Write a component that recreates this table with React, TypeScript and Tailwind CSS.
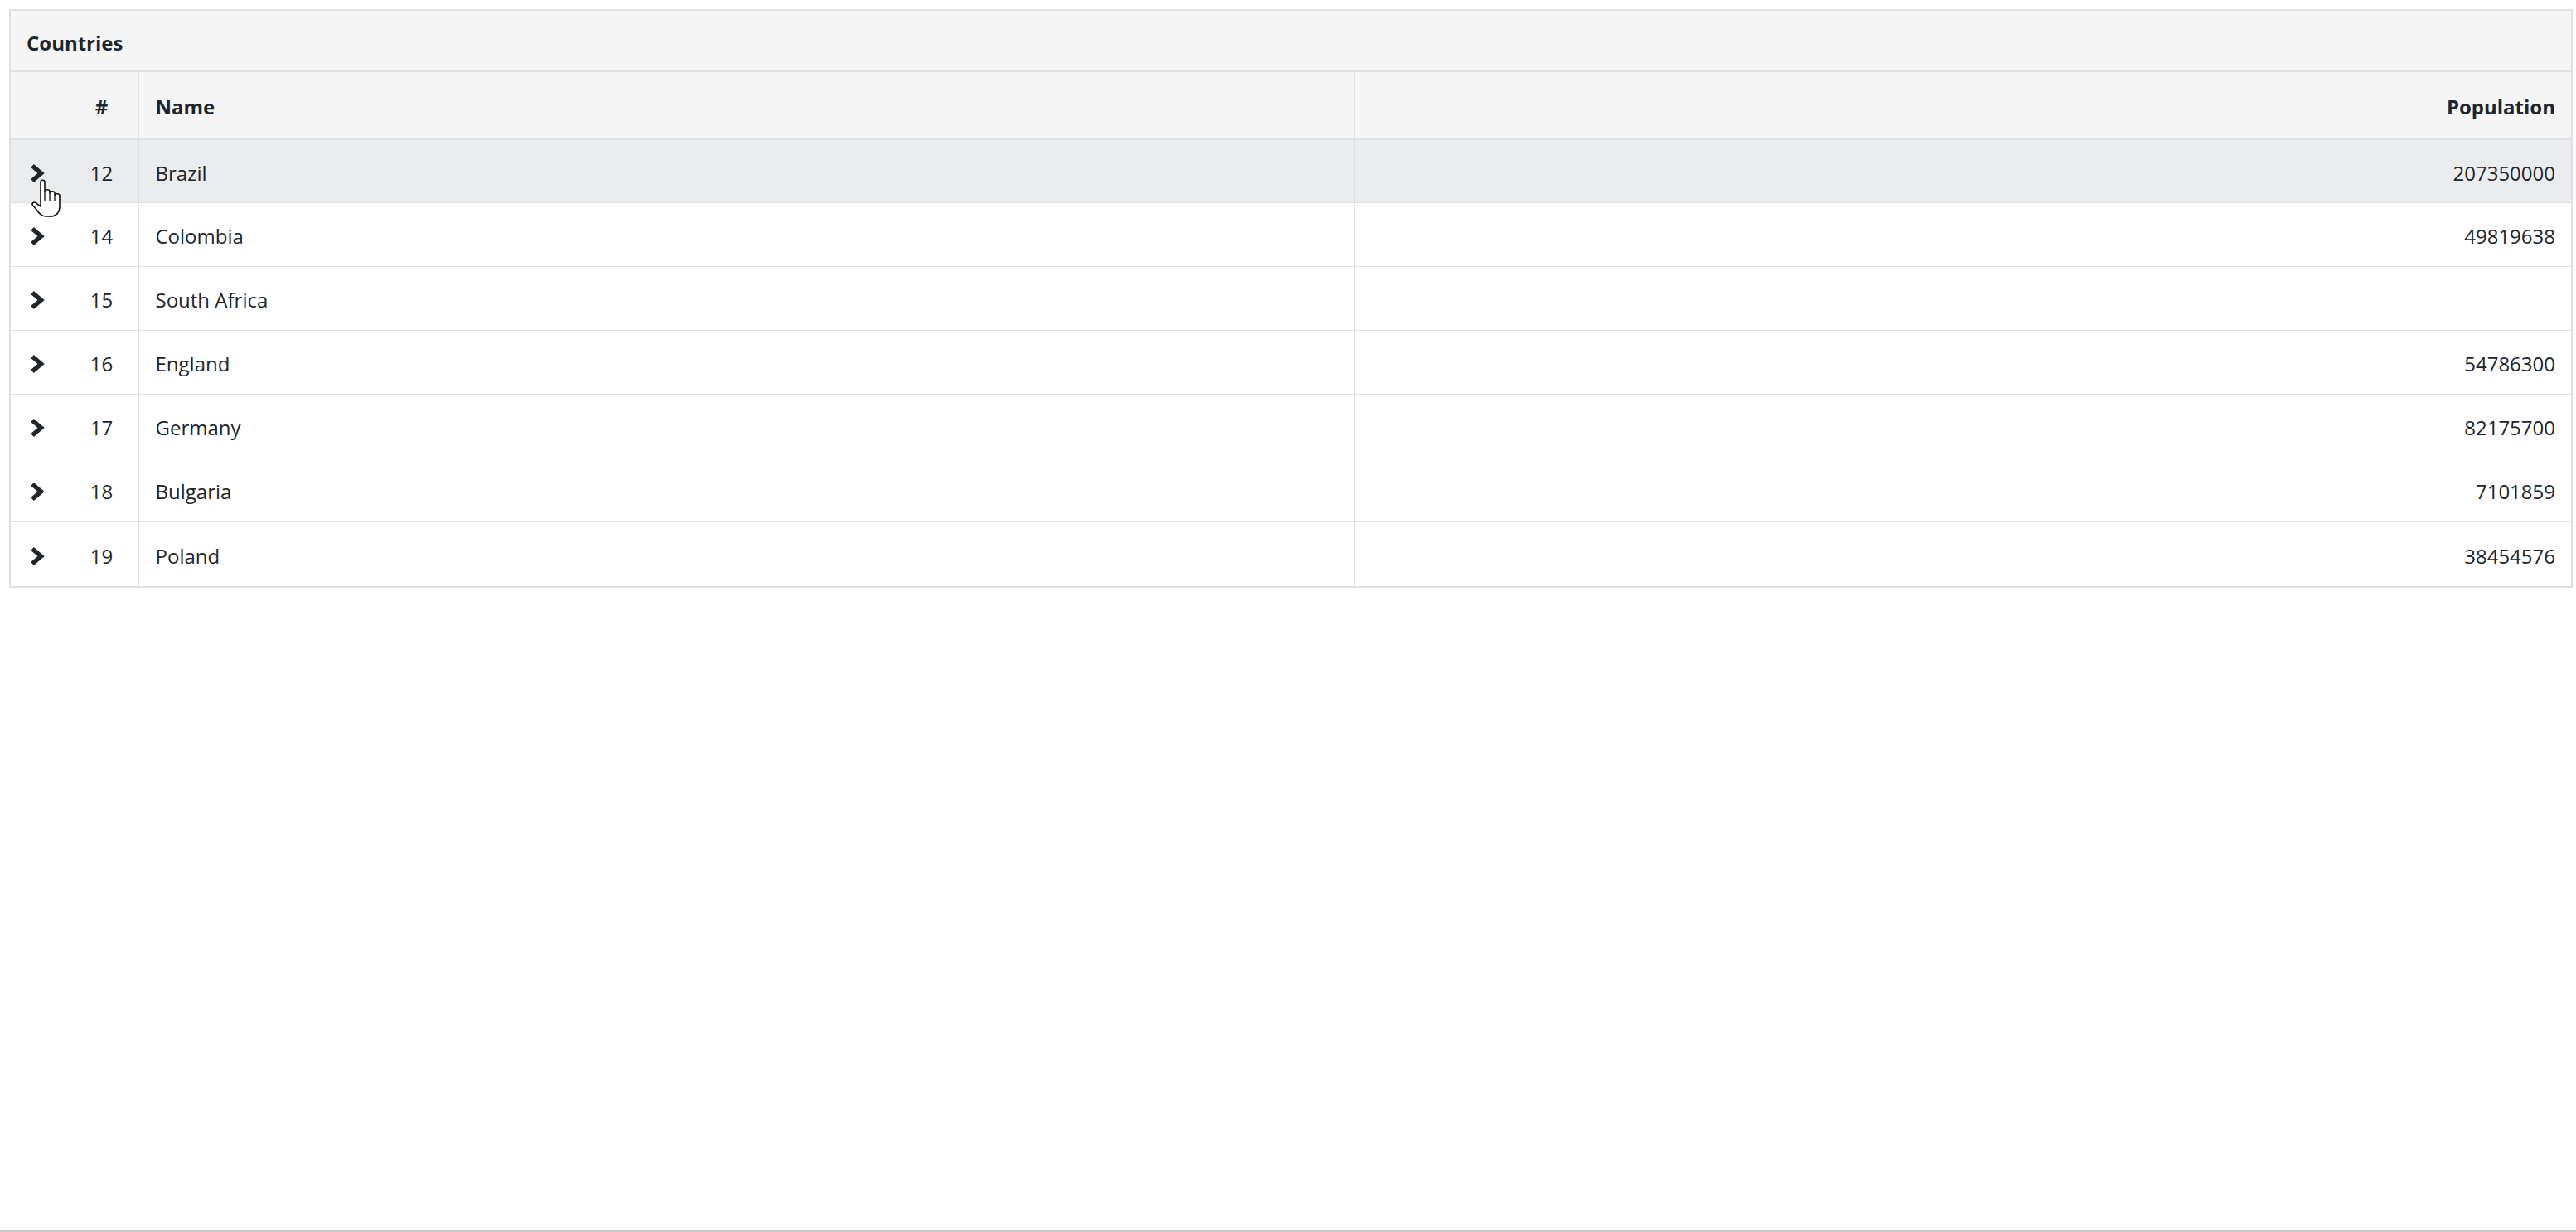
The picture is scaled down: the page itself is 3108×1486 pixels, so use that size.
const rows: { id: number; name: string; population: string }[] = [
  { id: 12, name: "Brazil", population: "207350000" },
  { id: 14, name: "Colombia", population: "49819638" },
  { id: 15, name: "South Africa", population: "" },
  { id: 16, name: "England", population: "54786300" },
  { id: 17, name: "Germany", population: "82175700" },
  { id: 18, name: "Bulgaria", population: "7101859" },
  { id: 19, name: "Poland", population: "38454576" },
];

function Chevron() {
  return (
    <svg width="20" height="24" viewBox="0 0 20 24" className="inline-block">
      <path
        d="M4 3 L14.5 12 L4 21"
        fill="none"
        stroke="#212529"
        strokeWidth="5.5"
        strokeLinejoin="miter"
      />
    </svg>
  );
}

function HandCursor() {
  return (
    <svg
      width="36"
      height="48"
      viewBox="0 0 36 48"
      className="pointer-events-none absolute left-[38px] top-[215px]"
    >
      <path
        d="M11 4.5 C11 1.5 16 1.5 16 4.5 L16 16 C16 13 22 13 22 16 L22 18 C22 15 28 15 28 18 L28 21 C28 18 34 18 34 21 L34 34 C34 41 30 46 23 46 L17 46 C12 46 9 42 6 38 L1.5 32.5 C0 30.5 2.5 28 5 29.5 L11 34 Z"
        fill="#ffffff"
        stroke="#111111"
        strokeWidth="1.6"
        strokeLinejoin="round"
      />
      <path d="M16 16 L16 27 M22 18 L22 27 M28 21 L28 27" stroke="#111111" strokeWidth="1.3" />
    </svg>
  );
}

export default function App() {
  return (
    <div
      className="relative flex h-[1486px] flex-col bg-white text-[#212529]"
      style={{ fontFamily: '"Open Sans", "Noto Sans", sans-serif' }}
    >
      <div className="ml-[11px] mr-[4px] mt-[11px] border-2 border-[#dee2e6]">
        <div className="flex h-[74px] items-center border-b-2 border-[#dee2e6] bg-[#f5f5f5] px-[19px] pt-[6px] text-[24px] font-bold">
          Countries
        </div>
        <table className="w-full table-fixed border-collapse text-[24px]">
          <colgroup>
            <col className="w-[65px]" />
            <col className="w-[89px]" />
            <col />
            <col />
          </colgroup>
          <thead>
            <tr className="h-[80px] border-b-[3px] border-[#dee2e6] bg-[#f5f5f5] font-bold">
              <th className="border-r border-[#dee2e6]" />
              <th className="border-r border-[#dee2e6] pt-[5px] text-center">#</th>
              <th className="border-r border-[#dee2e6] px-[20px] pt-[5px] text-left">Name</th>
              <th className="px-[19px] pt-[5px] text-right">Population</th>
            </tr>
          </thead>
          <tbody>
            {rows.map((r, i) => (
              <tr
                key={r.id}
                className={
                  i === rows.length - 1
                    ? "h-[78px]"
                    : i === 0
                      ? "h-[77px] border-b border-[#dee2e6] bg-[#ebeced]"
                      : "h-[77px] border-b border-[#dee2e6]"
                }
              >
                <td className="border-r border-[#dee2e6] text-center">
                  <Chevron />
                </td>
                <td className="border-r border-[#dee2e6] pt-[5px] text-center">{r.id}</td>
                <td className="border-r border-[#dee2e6] px-[20px] pt-[5px]">{r.name}</td>
                <td className="px-[19px] pt-[5px] text-right">{r.population}</td>
              </tr>
            ))}
          </tbody>
        </table>
      </div>
      <div className="mt-auto h-[2px] bg-[#c8c8c8]" />
      <HandCursor />
    </div>
  );
}
